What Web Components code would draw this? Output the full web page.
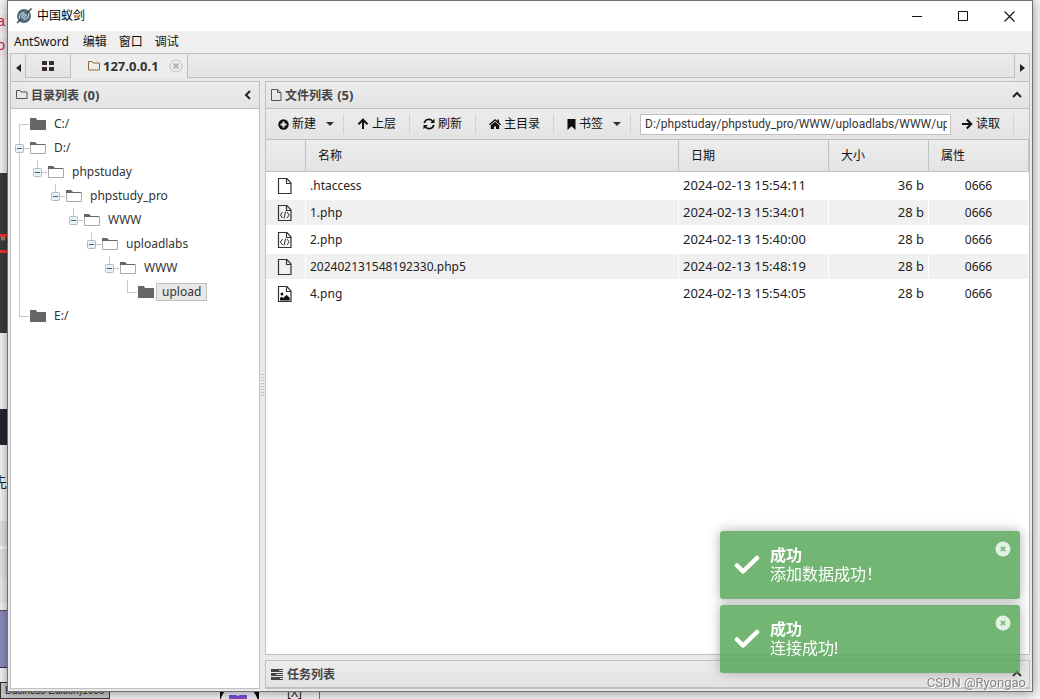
<!DOCTYPE html>
<html lang="zh-CN">
<head>
<meta charset="utf-8">
<title>中国蚁剑</title>
<style>
html, body { height: 100%; margin: 0; }
body {
  --line: #c0c0c0;
  --bar: linear-gradient(#ececec, #e3e3e3);
  position: relative; overflow: hidden; background: #f4f4f4; color: #222;
  font: 12px/16px "Noto Sans", "Noto Sans CJK SC", sans-serif;
}
</style>
</head>
<body>
<desk-backdrop></desk-backdrop>
<ant-window heading="中国蚁剑">
  <menu-bar slot="menu"></menu-bar>
  <tab-strip slot="tabs"></tab-strip>
  <ant-panel slot="side" icon="folder" heading="目录列表" count="(0)" toggle="left">
    <tree-node label="C:/" first></tree-node>
    <tree-node label="D:/" open>
      <tree-node label="phpstuday" open last>
        <tree-node label="phpstudy_pro" open last>
          <tree-node label="WWW" open last>
            <tree-node label="uploadlabs" open last>
              <tree-node label="WWW" open last>
                <tree-node label="upload" last selected></tree-node>
              </tree-node>
            </tree-node>
          </tree-node>
        </tree-node>
      </tree-node>
    </tree-node>
    <tree-node label="E:/" last></tree-node>
  </ant-panel>
  <ant-panel slot="main" icon="file" heading="文件列表" count="(5)" toggle="up">
    <tool-bar></tool-bar>
    <file-table></file-table>
  </ant-panel>
  <ant-panel slot="tasks" icon="tasks" heading="任务列表" toggle="up"></ant-panel>
</ant-window>
<toast-stack>
  <ant-toast heading="成功">添加数据成功！</ant-toast>
  <ant-toast heading="成功">连接成功!</ant-toast>
</toast-stack>
<water-mark>CSDN @Ryongao</water-mark>

<script>
const define = (name, render) => customElements.define(name, class extends HTMLElement {
  connectedCallback() {
    if (!this.shadowRoot) this.attachShadow({ mode: "open" }).innerHTML = render(this);
  }
});

const base = `*{box-sizing:border-box}button{font:inherit;color:inherit;background:none;border:0;padding:0;margin:0;display:flex;align-items:center}`;

const icons = {
  folder: [12, 12, `<path d="M.5 9.500v-8h3.500l1 1.500h6v6.500z" fill="none" stroke="#555"/>`],
  tabfolder: [12, 12, `<path d="M.5 10v-8.500h3.500l1 1.500h6.500v7z" fill="none" stroke="#8a6a3c"/>`],
  file: [11, 14, `<path d="M.5 1.500h6l3.500 3v8H.5zM6.500 1.500v3H10" fill="none" stroke="#555"/>`],
  tasks: [13, 12, `<path d="M0 1h12v3H0zM0 5h12v3H0zM0 9h12v3H0z" fill="#444"/><path d="M8 2h4v1H8zM5 6h7v1H5zM9 10h3v1H9z" fill="#ddd"/>`],
  left: [8, 10, `<path d="M6 1L2 5l4 4" fill="none" stroke="#222" stroke-width="2"/>`],
  up: [10, 8, `<path d="M1 6l4-4 4 4" fill="none" stroke="#222" stroke-width="2"/>`],
  triL: [5, 8, `<path d="M5 0v8L0 4z" fill="#222"/>`],
  triR: [5, 8, `<path d="M0 0v8l5-4z" fill="#222"/>`],
  triD: [8, 4, `<path d="M0 0h8L4 4z" fill="#333"/>`],
  grid: [12, 10, `<path d="M0 0h5v4H0zM7 0h5v4H7zM0 6h5v4H0zM7 6h5v4H7z" fill="#3a2f28"/>`],
  tabclose: [14, 14, `<circle cx="7" cy="7" r="6" fill="#eee" stroke="#bdbdbd"/><path d="M4.500 4.500l5 5M9.500 4.500l-5 5" stroke="#b5b5b5" stroke-width="2"/>`],
  plus: [11, 11, `<circle cx="5.500" cy="5.500" r="5.200" fill="#111"/><path d="M5.500 2.500v6M2.500 5.500h6" stroke="#eee" stroke-width="2"/>`],
  arrowUp: [12, 12, `<path d="M6 11V2M1.500 6.200L6 1.700l4.500 4.500" fill="none" stroke="#111" stroke-width="2"/>`],
  arrowRight: [11, 12, `<path d="M0 6H9M4.800 1.500L9.300 6l-4.500 4.500" fill="none" stroke="#111" stroke-width="2"/>`],
  refresh: [12, 12, `<path d="M1.200 5A4.800 4.800 0 0 1 9.500 3M10.800 7A4.800 4.800 0 0 1 2.500 9" fill="none" stroke="#111" stroke-width="1.700"/><path d="M11.500.8v4.300H7.200zM.5 11.200V6.900h4.300z" fill="#111"/>`],
  home: [12, 12, `<path d="M6 1L0 6.300l.8.900L6 2.800l5.200 4.400.8-.9-2-1.800V1.500H8.500v1.600z" fill="#111"/><path d="M1.800 7.300L6 3.800l4.200 3.500V11H7V8.500H5V11H1.800z" fill="#111"/>`],
  bookmark: [9, 11, `<path d="M.5 0h8v11l-4-3.800-4 3.800z" fill="#111"/>`],
  doc: [16, 18, `<path d="M1.500 1.500h8.500l4 4.500v10.500h-12.500zM9.500 1.500V6.500h4.500" fill="none" stroke="#333" stroke-width="1.200"/>`],
  code: [16, 18, `<path d="M1.500 1.500h8.500l4 4.500v10.500h-12.500zM9.500 1.500V6.500h4.500" fill="none" stroke="#333" stroke-width="1.200"/><path d="M5.600 8L3.400 11l2.200 3M10 8l2.200 3-2.200 3M8.600 7.500l-1.600 7" fill="none" stroke="#333"/>`],
  image: [16, 18, `<path d="M1.500 1.500h8.500l4 4.500v10.500h-12.500zM9.500 1.500V6.500h4.500" fill="none" stroke="#333" stroke-width="1.200"/><circle cx="5" cy="9" r="1.500" fill="#111"/><path d="M3 15.500V13l1.800-1.300 1.500 1.300L9.500 9.800l3.200 3v2.700z" fill="#111"/>`],
  closed: [16, 12, `<path d="M0 0h6l1 2h9v10H0z" fill="#666"/>`],
  opened: [16, 12, `<path d="M.5 2.500h15v9H.5z" fill="#fff" stroke="#aaa"/><path d="M0 0h5l2 2h8v1H0z" fill="#666"/>`],
  minus: [9, 9, `<rect x=".5" y=".5" width="8" height="8" rx="1" fill="#e9f1f5" stroke="#a9bcc6"/><path d="M2 4.500h5" stroke="#3b6478"/>`],
  check: [26, 20, `<path d="M3 10.500l6 6L23 3" fill="none" stroke="#fff" stroke-width="4.500" stroke-linecap="round" stroke-linejoin="round"/>`],
  toastclose: [16, 16, `<circle cx="8" cy="8" r="7.500" fill="#dceedc"/><path d="M5.800 5.800l4.400 4.400M10.200 5.800l-4.400 4.400" stroke="#62a862" stroke-width="1.700"/>`],
  min: [11, 11, `<path d="M0 5.500h10" stroke="#111"/>`],
  max: [11, 11, `<path d="M.5.5h9v9h-9z" fill="none" stroke="#111"/>`],
  close: [11, 11, `<path d="M.5.500l10 10M10.500.500l-10 10" stroke="#111" stroke-width="1.100"/>`],
  logo: [16, 16, `<circle cx="8" cy="8" r="7" fill="#4e6878"/><path d="M3.500 10.500c-1-3 2-6 5-6M12.500 5.500c1 3-2 6-5 6M6 8.500c1-2 3-2.500 4-1.500-.5 2-2 3-4 2.500z" fill="none" stroke="#b9c8d0" stroke-width="1.300"/><path d="M15.500.5l-4 4M4.500 11.500L1 15" stroke="#263640" stroke-width="1.300"/>`]
};
define("ant-icon", el => {
  const [w, h, body] = icons[el.getAttribute("name")];
  return `<style>:host{display:inline-flex;flex:none}svg{display:block}</style><svg width="${w}" height="${h}" viewBox="0 0 ${w} ${h}" aria-hidden="true">${body}</svg>`;
});

/* Whatever shows of the desktop round the edges of the window. */
define("desk-backdrop", () => `<style>${base}
  :host{position:absolute;inset:0;display:grid;grid-template-rows:1fr 17px;overflow:hidden}
  .left{display:flex;flex-direction:column;width:8px;overflow:hidden;font:14px/17px "Liberation Mono",monospace;color:#c7254e}
  .left>div{flex:none;overflow:hidden;white-space:nowrap}
  .code{background:#f3e9ec;text-indent:-3px}
  .dark{background:#3c3c3c;color:#ddd;padding-top:61px}
  .box{border-top:3px solid #e33;border-bottom:3px solid #e33;height:19px;line-height:12px;font-size:10px}
  .bottom{display:flex;overflow:hidden}
  .name{width:110px;border:1px solid #333;background:#c8c8c8;padding-left:4px;color:#222;font:10px/16px "Liberation Sans",sans-serif;white-space:nowrap;overflow:hidden}
  .app{margin-left:110px;width:39px;display:block}
  .key{width:61px;border-right:1px solid #777;padding:3px 0 0 28px;color:#222}
  </style>
  <div class="left"><div style="height:14px"></div><div class="code" style="height:18px">at</div><div style="height:6px"></div><div class="code" style="height:19px">ol</div>
  <div style="height:116px"></div><div class="dark" style="height:160px"><div class="box">",</div></div><div style="height:76px"></div><div style="height:36px;background:#23262e"></div>
  <div style="height:28px"></div><div style="height:18px;color:#222;font-family:'Noto Sans CJK SC',sans-serif;text-indent:-7px">先</div><div style="height:30px"></div>
  <div style="height:25px;background:#e2e2e2"></div><div style="height:3px"></div><div style="height:28px;background:#e2e2e8"></div><div style="height:26px;background:#eaeaea"></div><div style="height:7px"></div>
  <div style="height:58px;background:#8c8cc0;border-top:1px solid #555;border-bottom:1px solid #334"></div></div>
  <div class="bottom"><div class="name">Business Edition)1000</div>
  <svg class="app" width="39" height="17" viewBox="0 0 39 17" aria-hidden="true"><path d="M0 0h39v17H0z" fill="#050505"/><circle cx="19" cy="22" r="19" fill="#f0ecf6"/><path d="M9 13h7l2 1 2-1h7v4H9z" fill="#7c4dd4"/></svg>
  <div class="key">[X]</div></div>`);

define("ant-window", el => `<style>${base}
  :host{position:relative;height:calc(100vh - 7px);margin:0 7px;display:flex;flex-direction:column;background:#eaeaea;border:1px solid #707070;box-sizing:border-box;box-shadow:0 1px 10px rgba(0,0,0,.4)}
  header{height:30px;flex:none;background:#fff;display:flex;align-items:center;padding-left:8px;color:#000}
  h1{font:inherit;margin:0 0 0 5px;flex:1}
  header button{width:46px;height:30px;justify-content:center}
  .work{flex:1;min-height:0;margin:0 2px 2px;display:grid;grid-template-columns:250px 5px minmax(0,1fr);grid-template-rows:minmax(0,1fr) 29px;row-gap:5px}
  slot[name=side]::slotted(*){grid-row:1/3}
  .split{grid-row:1/3;grid-column:2;display:flex;align-items:center;justify-content:center}
  .split i{width:3px;height:22px;background:repeating-linear-gradient(#c4c4c4 0 1px,transparent 1px 3px)}
  slot[name=main]::slotted(*),slot[name=tasks]::slotted(*){grid-column:3}
  </style>
  <header><ant-icon name="logo"></ant-icon><h1>${el.getAttribute("heading")}</h1>
  <button aria-label="最小化"><ant-icon name="min"></ant-icon></button><button aria-label="最大化"><ant-icon name="max"></ant-icon></button><button aria-label="关闭"><ant-icon name="close"></ant-icon></button></header>
  <slot name="menu"></slot><slot name="tabs"></slot>
  <div class="work"><slot name="side"></slot><div class="split"><i></i></div><slot name="main"></slot><slot name="tasks"></slot></div>`);

define("menu-bar", () => `<style>${base}
  :host{display:block;flex:none;background:#efefef;color:#111}
  nav{display:flex;gap:12px;height:22px;padding-left:6px}
  .brand{padding-right:2px}
  </style><nav><button class="brand">AntSword</button><button>编辑</button><button>窗口</button><button>调试</button></nav>`);

define("tab-strip", () => `<style>${base}
  :host{display:flex;flex:none;height:28px;margin:0 2px;border:1px solid var(--line);border-bottom:0;background:#e8e8e8;box-sizing:border-box}
  button{justify-content:center}
  .step{width:14px;background:var(--bar)}
  .rail{flex:1;display:flex;height:24px;background:var(--bar);border-left:1px solid var(--line);border-right:1px solid var(--line)}
  .tab{width:45px;border-bottom:1px solid var(--line);border-right:1px solid var(--line)}
  .on{display:flex;align-items:center;background:#ededed;border-right:1px solid var(--line);padding:0 4px 0 17px}
  .on .name{font-weight:700;font-size:13px;color:#333;gap:3px;margin-right:10px}
  .rest{flex:1;border-bottom:1px solid var(--line)}
  </style>
  <button class="step" aria-label="向左"><ant-icon name="triL"></ant-icon></button>
  <div class="rail"><button class="tab" aria-label="主页"><ant-icon name="grid"></ant-icon></button>
  <div class="on"><button class="name"><ant-icon name="tabfolder"></ant-icon>127.0.0.1</button><button aria-label="关闭标签"><ant-icon name="tabclose"></ant-icon></button></div><div class="rest"></div></div>
  <button class="step" aria-label="向右"><ant-icon name="triR"></ant-icon></button>`);

define("ant-panel", el => `<style>${base}
  :host{display:flex;flex-direction:column;min-width:0;min-height:0;box-sizing:border-box;border:1px solid var(--line);background:#fff;overflow:hidden}
  header{height:27px;flex:none;display:flex;align-items:center;gap:3px;padding:0 7px 0 5px;background:var(--bar);border-bottom:1px solid var(--line)}
  h2{font:inherit;font-weight:700;margin:0;flex:1;color:#444}
  h2 span{font-size:13px;margin-left:1px}
  main{flex:1;min-height:0}
  :host([toggle=left]) main{padding-top:3px}
  </style>
  <header><ant-icon name="${el.getAttribute("icon")}"></ant-icon><h2>${el.getAttribute("heading")} <span>${el.getAttribute("count") || ""}</span></h2><button aria-label="折叠"><ant-icon name="${el.getAttribute("toggle")}"></ant-icon></button></header>
  <main><slot></slot></main>`);

define("tree-node", el => {
  const open = el.hasAttribute("open");
  return `<style>${base}
  :host{display:block;background:linear-gradient(#c8c8c8,#c8c8c8) 8px 0/1px 100% no-repeat}
  :host([last]){background-size:1px 13px}
  :host([first]){background-position:8px 12px;background-size:1px 12px}
  .row{display:flex;align-items:center;height:24px}
  .joint{width:19px;height:24px;display:flex;align-items:center;padding-left:4px;background:linear-gradient(#c8c8c8,#c8c8c8) 8px 12px/10px 1px no-repeat}
  button{margin-left:2px;padding:0 5px;height:18px;border:1px solid transparent;color:#333}
  :host([selected]) button{background:#e8e8e8;border-color:#c0c0c0}
  .kids{padding-left:18px}
  </style>
  <div class="row"><span class="joint">${open ? '<ant-icon name="minus"></ant-icon>' : ""}</span><ant-icon name="${open ? "opened" : "closed"}"></ant-icon><button>${el.getAttribute("label")}</button></div>
  <div class="kids"><slot></slot></div>`;
});

define("tool-bar", () => `<style>${base}
  :host{display:flex;align-items:center;height:31px;padding-left:12px;box-sizing:border-box;background:var(--bar);border-bottom:1px solid var(--line);color:#111}
  button{gap:3px;flex:none;height:24px}
  .menu{margin-left:10px}
  hr{width:1px;height:20px;border:0;margin:0 13px;background:#c5d6dc;flex:none}
  .tight{margin-left:9px}
  .field{margin-right:9px}
  .end{margin-right:15px}
  input{flex:1;min-width:0;height:21px;margin-right:11px;padding:0 3px 0 4px;border:1px solid var(--line);background:#fff;color:#333;font:12px Roboto,"Noto Sans",sans-serif;outline:0}
  </style>
  <button><ant-icon name="plus"></ant-icon>新建</button><button class="menu" aria-label="新建选项"><ant-icon name="triD"></ant-icon></button><hr class="tight">
  <button><ant-icon name="arrowUp"></ant-icon>上层</button><hr>
  <button><ant-icon name="refresh"></ant-icon>刷新</button><hr>
  <button><ant-icon name="home"></ant-icon>主目录</button><hr>
  <button><ant-icon name="bookmark"></ant-icon>书签</button><button class="menu" aria-label="书签选项"><ant-icon name="triD"></ant-icon></button><hr class="tight field">
  <input aria-label="路径" value="D:/phpstuday/phpstudy_pro/WWW/uploadlabs/WWW/upload/">
  <button><ant-icon name="arrowRight"></ant-icon>读取</button><hr class="end">`);

const files = [
  ["doc", ".htaccess", "2024-02-13 15:54:11", "36 b", "0666"],
  ["code", "1.php", "2024-02-13 15:34:01", "28 b", "0666"],
  ["code", "2.php", "2024-02-13 15:40:00", "28 b", "0666"],
  ["doc", "202402131548192330.php5", "2024-02-13 15:48:19", "28 b", "0666"],
  ["image", "4.png", "2024-02-13 15:54:05", "28 b", "0666"]
];
define("file-table", () => `<style>${base}
  :host{display:block}
  table{width:100%;table-layout:fixed;border-collapse:separate;border-spacing:0}
  th{height:32px;padding:0 0 0 12px;text-align:left;font-weight:400;color:#111;border-right:1px solid var(--line);border-bottom:1px solid var(--line)}
  thead tr{background:var(--bar)}
  td{height:27px;padding:0 4px;border-right:1px solid #fff;border-top:1px solid #fff;border-bottom:1px solid #fff;color:#222}
  tbody tr:nth-child(even){background:#f0f0f0}
  td ant-icon{display:block;margin-left:7px}
  .num{font-size:13px;padding-bottom:2px}
  .size{text-align:right}.mode{text-align:center}
  </style>
  <table><colgroup><col style="width:40px"><col><col style="width:150px"><col style="width:100px"><col style="width:100px"></colgroup>
  <thead><tr><th aria-label="类型"></th><th>名称</th><th>日期</th><th>大小</th><th>属性</th></tr></thead>
  <tbody>${files.map(f => `<tr><td><ant-icon name="${f[0]}"></ant-icon></td><td>${f[1]}</td><td class="num">${f[2]}</td><td class="num size">${f[3]}</td><td class="mode">${f[4]}</td></tr>`).join("")}</tbody></table>`);

define("toast-stack", () => `<style>:host{position:fixed;right:20px;bottom:26px;display:flex;flex-direction:column;gap:6px}</style><slot></slot>`);
define("ant-toast", el => `<style>${base}
  :host{display:flex;align-items:flex-start;width:300px;height:68px;box-sizing:border-box;padding:15px 9px 15px 14px;border-radius:3px;background:rgb(81,163,81);box-shadow:0 0 12px #999;opacity:.8;color:#fff;font-size:16px;line-height:19px}
  .tick{margin:9px 10px 0 0}
  div{flex:1} strong{display:block}
  button{margin-top:-5px}
  </style><ant-icon class="tick" name="check"></ant-icon><div role="status"><strong>${el.getAttribute("heading")}</strong><slot></slot></div><button aria-label="关闭通知"><ant-icon name="toastclose"></ant-icon></button>`);

define("water-mark", () => `<style>:host{position:absolute;right:14px;bottom:7px;font:13px/18px Roboto,"Liberation Sans",sans-serif;color:#858585;text-shadow:1px 1px 0 #fff;pointer-events:none}</style><slot></slot>`);
</script>
</body>
</html>
